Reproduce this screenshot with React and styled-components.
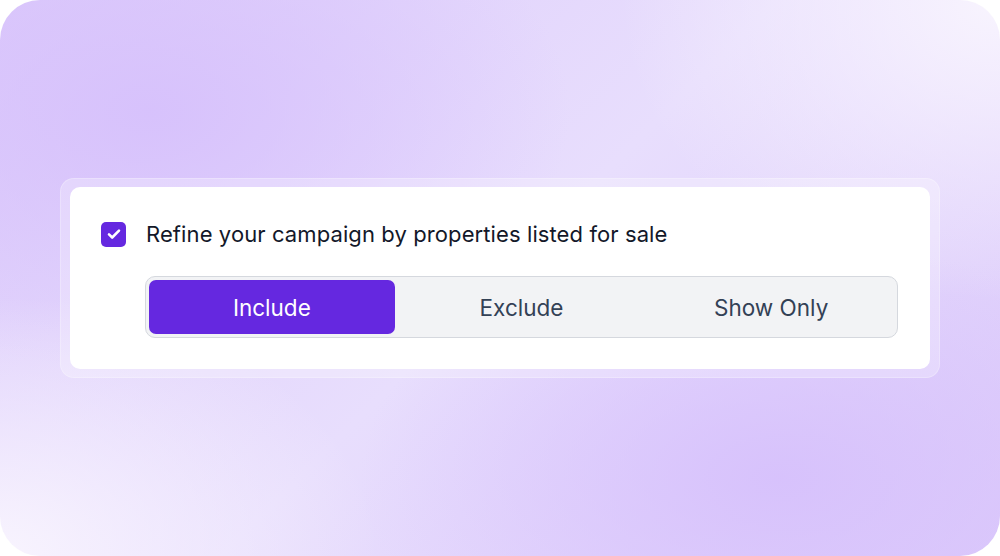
import React, { useState } from 'react';
import styled, { createGlobalStyle } from 'styled-components';

const GlobalStyle = createGlobalStyle`
  html, body {
    margin: 0;
    padding: 0;
    background: #ffffff;
    font-family: Inter, "Noto Sans", sans-serif;
  }
`;

const Frame = styled.div`
  width: 1000px;
  height: 556px;
  border-radius: 40px;
  overflow: hidden;
  display: flex;
  align-items: center;
  justify-content: center;
  background:
    radial-gradient(ellipse 380px 300px at 100% 0%, rgba(248, 244, 254, 1), rgba(248, 244, 254, 0) 100%),
    radial-gradient(ellipse 380px 260px at 0% 100%, rgba(248, 244, 254, 1), rgba(248, 244, 254, 0) 100%),
    radial-gradient(ellipse 420px 260px at 15% 20%, rgba(214, 192, 252, 0.9), rgba(214, 192, 252, 0) 100%),
    radial-gradient(ellipse 420px 240px at 78% 86%, rgba(214, 192, 252, 0.9), rgba(214, 192, 252, 0) 100%),
    linear-gradient(135deg, #dccafb 0%, #e8defd 50%, #dccafb 100%);
`;

const Halo = styled.div`
  padding: 9px 10px;
  border-radius: 14px;
  background: rgba(255, 255, 255, 0.28);
  box-shadow: inset 0 0 0 1px rgba(255, 255, 255, 0.25);
`;

const Card = styled.div`
  width: 860px;
  box-sizing: border-box;
  padding: 34px 32px 31px 31px;
  background: #ffffff;
  border-radius: 10px;
  display: flex;
  flex-direction: column;
  gap: 29px;
`;

const CheckRow = styled.label`
  display: flex;
  align-items: center;
  gap: 20px;
  cursor: pointer;
`;

const Box = styled.span`
  width: 25px;
  height: 25px;
  border-radius: 5px;
  background: ${p => (p.$checked ? '#6528e0' : '#ffffff')};
  border: ${p => (p.$checked ? 'none' : '1.5px solid #c7cad1')};
  display: flex;
  align-items: center;
  justify-content: center;
  flex-shrink: 0;
`;

const Label = styled.span`
  font-size: 22px;
  color: #131829;
  letter-spacing: 0.1px;
`;

const Segmented = styled.div`
  margin-left: 44px;
  padding: 3px;
  border: 1.5px solid #d5d8de;
  border-radius: 10px;
  background: #f2f3f5;
  display: grid;
  grid-template-columns: repeat(3, 1fr);
  gap: 4px;
`;

const Segment = styled.button`
  height: 54px;
  border: none;
  border-radius: 7px;
  font-family: inherit;
  font-size: 22.5px;
  cursor: pointer;
  background: ${p => (p.$active ? '#6528e0' : 'transparent')};
  color: ${p => (p.$active ? '#ffffff' : '#334155')};
`;

const options = ['Include', 'Exclude', 'Show Only'];

export default function App() {
  const [checked, setChecked] = useState(true);
  const [active, setActive] = useState('Include');

  return (
    <>
      <GlobalStyle />
      <Frame>
        <Halo>
          <Card>
            <CheckRow onClick={() => setChecked(!checked)}>
              <Box $checked={checked}>
                {checked && (
                  <svg width="16" height="16" viewBox="0 0 16 16" fill="none">
                    <path d="M3 8.4l3.2 3.1L13 4.6" stroke="#fff" strokeWidth="2.6" strokeLinecap="round" strokeLinejoin="round" />
                  </svg>
                )}
              </Box>
              <Label>Refine your campaign by properties listed for sale</Label>
            </CheckRow>
            <Segmented>
              {options.map(o => (
                <Segment key={o} $active={active === o} onClick={() => setActive(o)}>
                  {o}
                </Segment>
              ))}
            </Segmented>
          </Card>
        </Halo>
      </Frame>
    </>
  );
}
